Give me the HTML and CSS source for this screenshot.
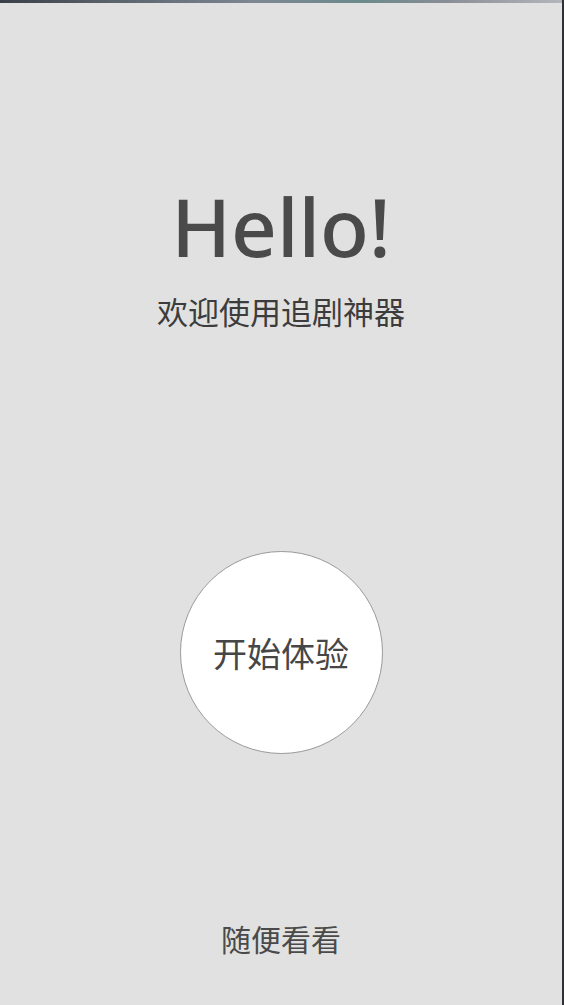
FILE: index.html
```html
<!DOCTYPE html>
<html lang="zh-CN">
<head>
<meta charset="utf-8">
<title>欢迎</title>
<link rel="stylesheet" href="styles.css">
</head>
<body>
<div class="screen">
  <div class="topstrip"></div>
  <main class="content">
    <section class="welcome">
      <h1 class="hello">Hello!</h1>
      <p class="subtitle">欢迎使用追剧神器</p>
    </section>
    <button class="start" type="button">开始体验</button>
    <a class="browse" href="#">随便看看</a>
  </main>
</div>
</body>
</html>
```
FILE: styles.css
```css
html, body {
  margin: 0;
  padding: 0;
  height: 100%;
}
body {
  background: #e1e1e1;
  font-family: "Noto Sans", "Noto Sans CJK SC", sans-serif;
  color: #4a4a4a;
}
.screen {
  height: 1005px;
  display: flex;
  flex-direction: column;
  border-right: 2px solid #2e3136;
  box-sizing: border-box;
}
.topstrip {
  height: 3px;
  background: linear-gradient(90deg, #3b4048 0%, #5a626c 20%, #7d8793 45%, #6b8a8c 65%, #8a8e96 80%, #b3b6ba 100%);
}
.content {
  flex: 1;
  display: flex;
  flex-direction: column;
  align-items: center;
}
.welcome {
  display: flex;
  flex-direction: column;
  align-items: center;
  margin-top: 183px;
}
.hello {
  margin: 0;
  font-family: "Noto Sans", sans-serif;
  font-weight: 500;
  font-size: 80px;
  line-height: 80px;
  color: #4a4a4a;
}
.subtitle {
  margin: 27px 0 0;
  font-family: "Noto Sans CJK SC", sans-serif;
  font-size: 31px;
  line-height: 36px;
  color: #3c3c3c;
}
.start {
  margin-top: 222px;
  width: 203px;
  height: 203px;
  border-radius: 50%;
  border: 1px solid #9a9a9a;
  background: #ffffff;
  font-family: "Noto Sans CJK SC", sans-serif;
  font-size: 34px;
  color: #464646;
  padding: 0;
  cursor: pointer;
}
.browse {
  margin-top: 166px;
  font-family: "Noto Sans CJK SC", sans-serif;
  font-size: 30px;
  line-height: 36px;
  color: #4a4a4a;
  text-decoration: none;
}
```
